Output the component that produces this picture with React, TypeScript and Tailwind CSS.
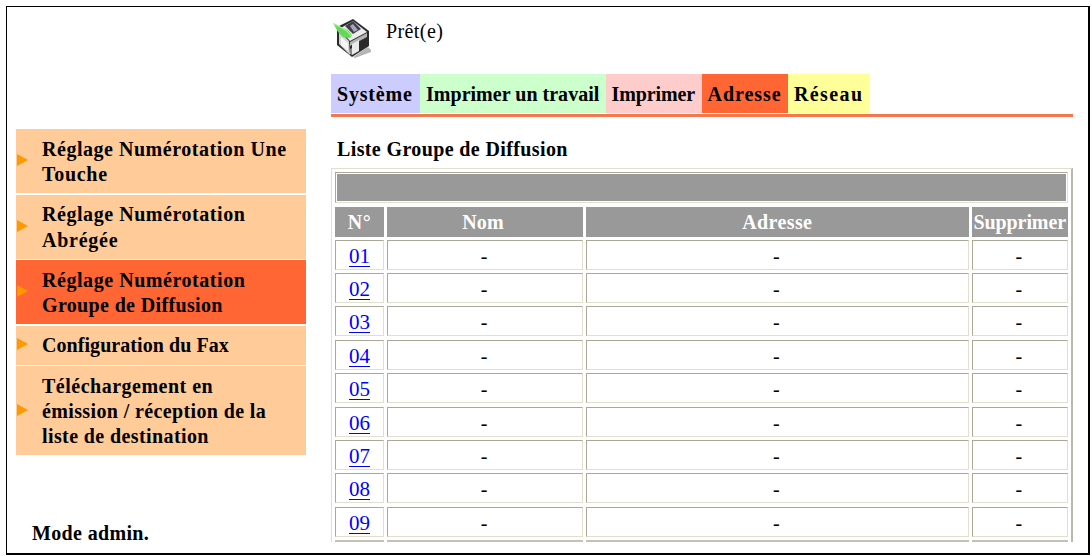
import { clsx } from 'clsx'

const tabs = [
  { label: 'Système', style: 'w-[89px] bg-[#ccccff]', text: 'tracking-[0.8px]' },
  { label: 'Imprimer un travail', style: 'w-[185.5px] bg-[#ccffcc]', text: 'tracking-[0.02px]' },
  { label: 'Imprimer', style: 'w-[96px] bg-[#ffcccc]', text: 'tracking-[-0.1px]' },
  { label: 'Adresse', style: 'w-[86.5px] bg-[#ff6633]', text: 'tracking-[0.95px]' },
  { label: 'Réseau', style: 'w-[81px] bg-[#ffff99]', text: 'tracking-[1.4px]' },
]

const menu = [
  {
    height: 'h-16',
    lines: [
      { text: 'Réglage Numérotation Une', style: 'tracking-[0.53px]' },
      { text: 'Touche', style: 'tracking-[0.7px]' },
    ],
  },
  {
    height: 'h-16',
    lines: [
      { text: 'Réglage Numérotation', style: 'tracking-[0.55px]' },
      { text: 'Abrégée', style: 'tracking-[0.75px]' },
    ],
  },
  {
    height: 'h-16',
    active: true,
    lines: [
      { text: 'Réglage Numérotation', style: 'tracking-[0.55px]' },
      { text: 'Groupe de Diffusion', style: 'tracking-[0.35px]' },
    ],
  },
  {
    height: 'h-[39px]',
    lines: [{ text: 'Configuration du Fax', style: 'tracking-[0.06px]' }],
  },
  {
    height: 'h-[89px]',
    lines: [
      { text: 'Téléchargement en', style: 'tracking-[0.5px]' },
      { text: 'émission / réception de la', style: 'tracking-[0.37px]' },
      { text: 'liste de destination', style: 'tracking-[0.4px]' },
    ],
  },
]

const rows = ['01', '02', '03', '04', '05', '06', '07', '08', '09']

const headings = [
  { label: 'N°', style: 'tracking-[0.5px]' },
  { label: 'Nom', style: '-translate-x-0.5 tracking-[0.1px]' },
  { label: 'Adresse', style: 'tracking-[0.4px]' },
  { label: 'Supprimer', style: 'tracking-[-0.1px]' },
]

const columns = 'grid grid-cols-[49px_196px_382.5px_96.5px] gap-x-[3px]'
const cell = 'flex h-[30px] items-center justify-center border-t-[1.5px] border-l-[1.5px] border-r border-b border-t-[#aca899] border-l-[#aca899] border-r-[#e2dfce] border-b-[#e2dfce] pt-[3px] pr-0.5'

function PrinterIcon() {
  return (
    <svg width="40" height="40" viewBox="0 0 40 40">
      {/* shadow */}
      <path d="M20 38l15-10 3 3v2L22 39z" fill="#b5b5b5" />
      {/* body */}
      <path d="M4 8L20 0l16 12v15L19 38 4 26z" fill="#2a2a2a" />
      <path d="M6 12l10 10 1 14L6 25z" fill="#d4d4d4" />
      <path d="M8 18l7 6v8l-7-6z" fill="#f5f5f5" />
      <path d="M6 10L20 2l14 11-17 9z" fill="#ececec" />
      <path d="M17 23l17-9v4l-17 9z" fill="#b3b3b3" />
      <path d="M19 25l7-4v11l-7 4z" fill="#e9e9e9" />
      <path d="M17 30l2-1v7l-2-1z" fill="#888" />
      {/* paper slot */}
      <path d="M12 7l8-5 8 8-8 5z" fill="#403f49" />
      <path d="M17 7l3-2 5 6-4 2z" fill="#a8a5be" />
      {/* pen */}
      <path d="M0 4l8 4 7 3 4 5-2 3-7-1-5-5z" fill="#65d957" />
      <path d="M1 5l8 4 5 3 4 5" fill="none" stroke="#a6f397" strokeWidth="1.2" />
    </svg>
  )
}

function Sidebar() {
  return (
    <aside className="w-[290px] shrink-0 pt-[122px]">
      <nav className="flex flex-col gap-[1.5px]">
        {menu.map((item, i) => (
          <div key={i} className={clsx('flex items-center pl-px', item.height, item.active ? 'bg-[#ff6633]' : 'bg-[#ffcc99]')}>
            <svg width="11" height="12" viewBox="0 0 11 12" className="mr-3.5 -mt-0.5 shrink-0">
              <path d="M0 0L11 6 0 12z" fill="#ff9900" />
            </svg>
            <div className="pt-0.5 font-bold">
              {item.lines.map(line => (
                <div key={line.text} className={clsx('h-[25.3px] leading-[25.3px] whitespace-nowrap', line.style)}>{line.text}</div>
              ))}
            </div>
          </div>
        ))}
      </nav>
      <div className="mt-[66px] ml-4 font-bold tracking-[0.35px]">Mode admin.</div>
    </aside>
  )
}

function GroupTable() {
  return (
    <div className="h-[374px] w-[742px] overflow-hidden border-t border-r-2 border-l border-t-[#e2dfce] border-r-[#b9b9b0] border-l-[#e2dfce] pt-[3px] pl-[3px]">
      <div className="h-[31px] w-[733px] border border-t-[#aca899] border-r-[#e2dfce] border-b-[#e2dfce] border-l-[#aca899] p-px">
        <div className="h-full bg-[#999999]" />
      </div>
      <div className={clsx(columns, 'mt-[3.5px] font-bold text-white')}>
        {headings.map(h => (
          <div key={h.label} className="flex h-[30px] items-center justify-center bg-[#999999] pt-0.5">
            <span className={h.style}>{h.label}</span>
          </div>
        ))}
      </div>
      <div className="mt-[3.3px] flex flex-col gap-[3.35px]">
        {rows.map(no => (
          <div key={no} className={columns}>
            <div className={cell}>
              <a href="#" className="ml-0.5 text-[21px] text-[#0000ff] underline decoration-1 underline-offset-3">{no}</a>
            </div>
            <div className={cell}>-</div>
            <div className={cell}>-</div>
            <div className={cell}>-</div>
          </div>
        ))}
        <div className={columns}>
          {headings.map(h => <div key={h.label} className="h-0.5 bg-[#c4c2b6]" />)}
        </div>
      </div>
    </div>
  )
}

export default function App() {
  return (
    <div className="h-[556px] w-[1092px] overflow-hidden bg-white pt-1.5 pl-1.5 font-['Liberation_Serif',serif] text-[20px] leading-[25px] text-black">
      <div className="flex h-[549px] w-[1084px] border border-r-2 border-b-2 border-black pl-[9px]">
        <Sidebar />
        <main className="ml-[25px] w-[742px]">
          <header className="flex h-[67px] pt-3">
            <div className="ml-0.5"><PrinterIcon /></div>
            <span className="ml-[13px] tracking-[0.4px]">Prêt(e)</span>
          </header>
          <div className="flex">
            {tabs.map(tab => (
              <div key={tab.label} className={clsx('flex h-[39px] items-center pt-0.5 pl-1.5 font-bold whitespace-nowrap', tab.style, tab.text)}>
                {tab.label}
              </div>
            ))}
          </div>
          <div className="mt-px h-[3px] bg-[#f4774f]" />
          <h1 className="mt-5 mb-1.5 ml-1.5 font-bold tracking-[0.38px]">Liste Groupe de Diffusion</h1>
          <GroupTable />
        </main>
      </div>
    </div>
  )
}
